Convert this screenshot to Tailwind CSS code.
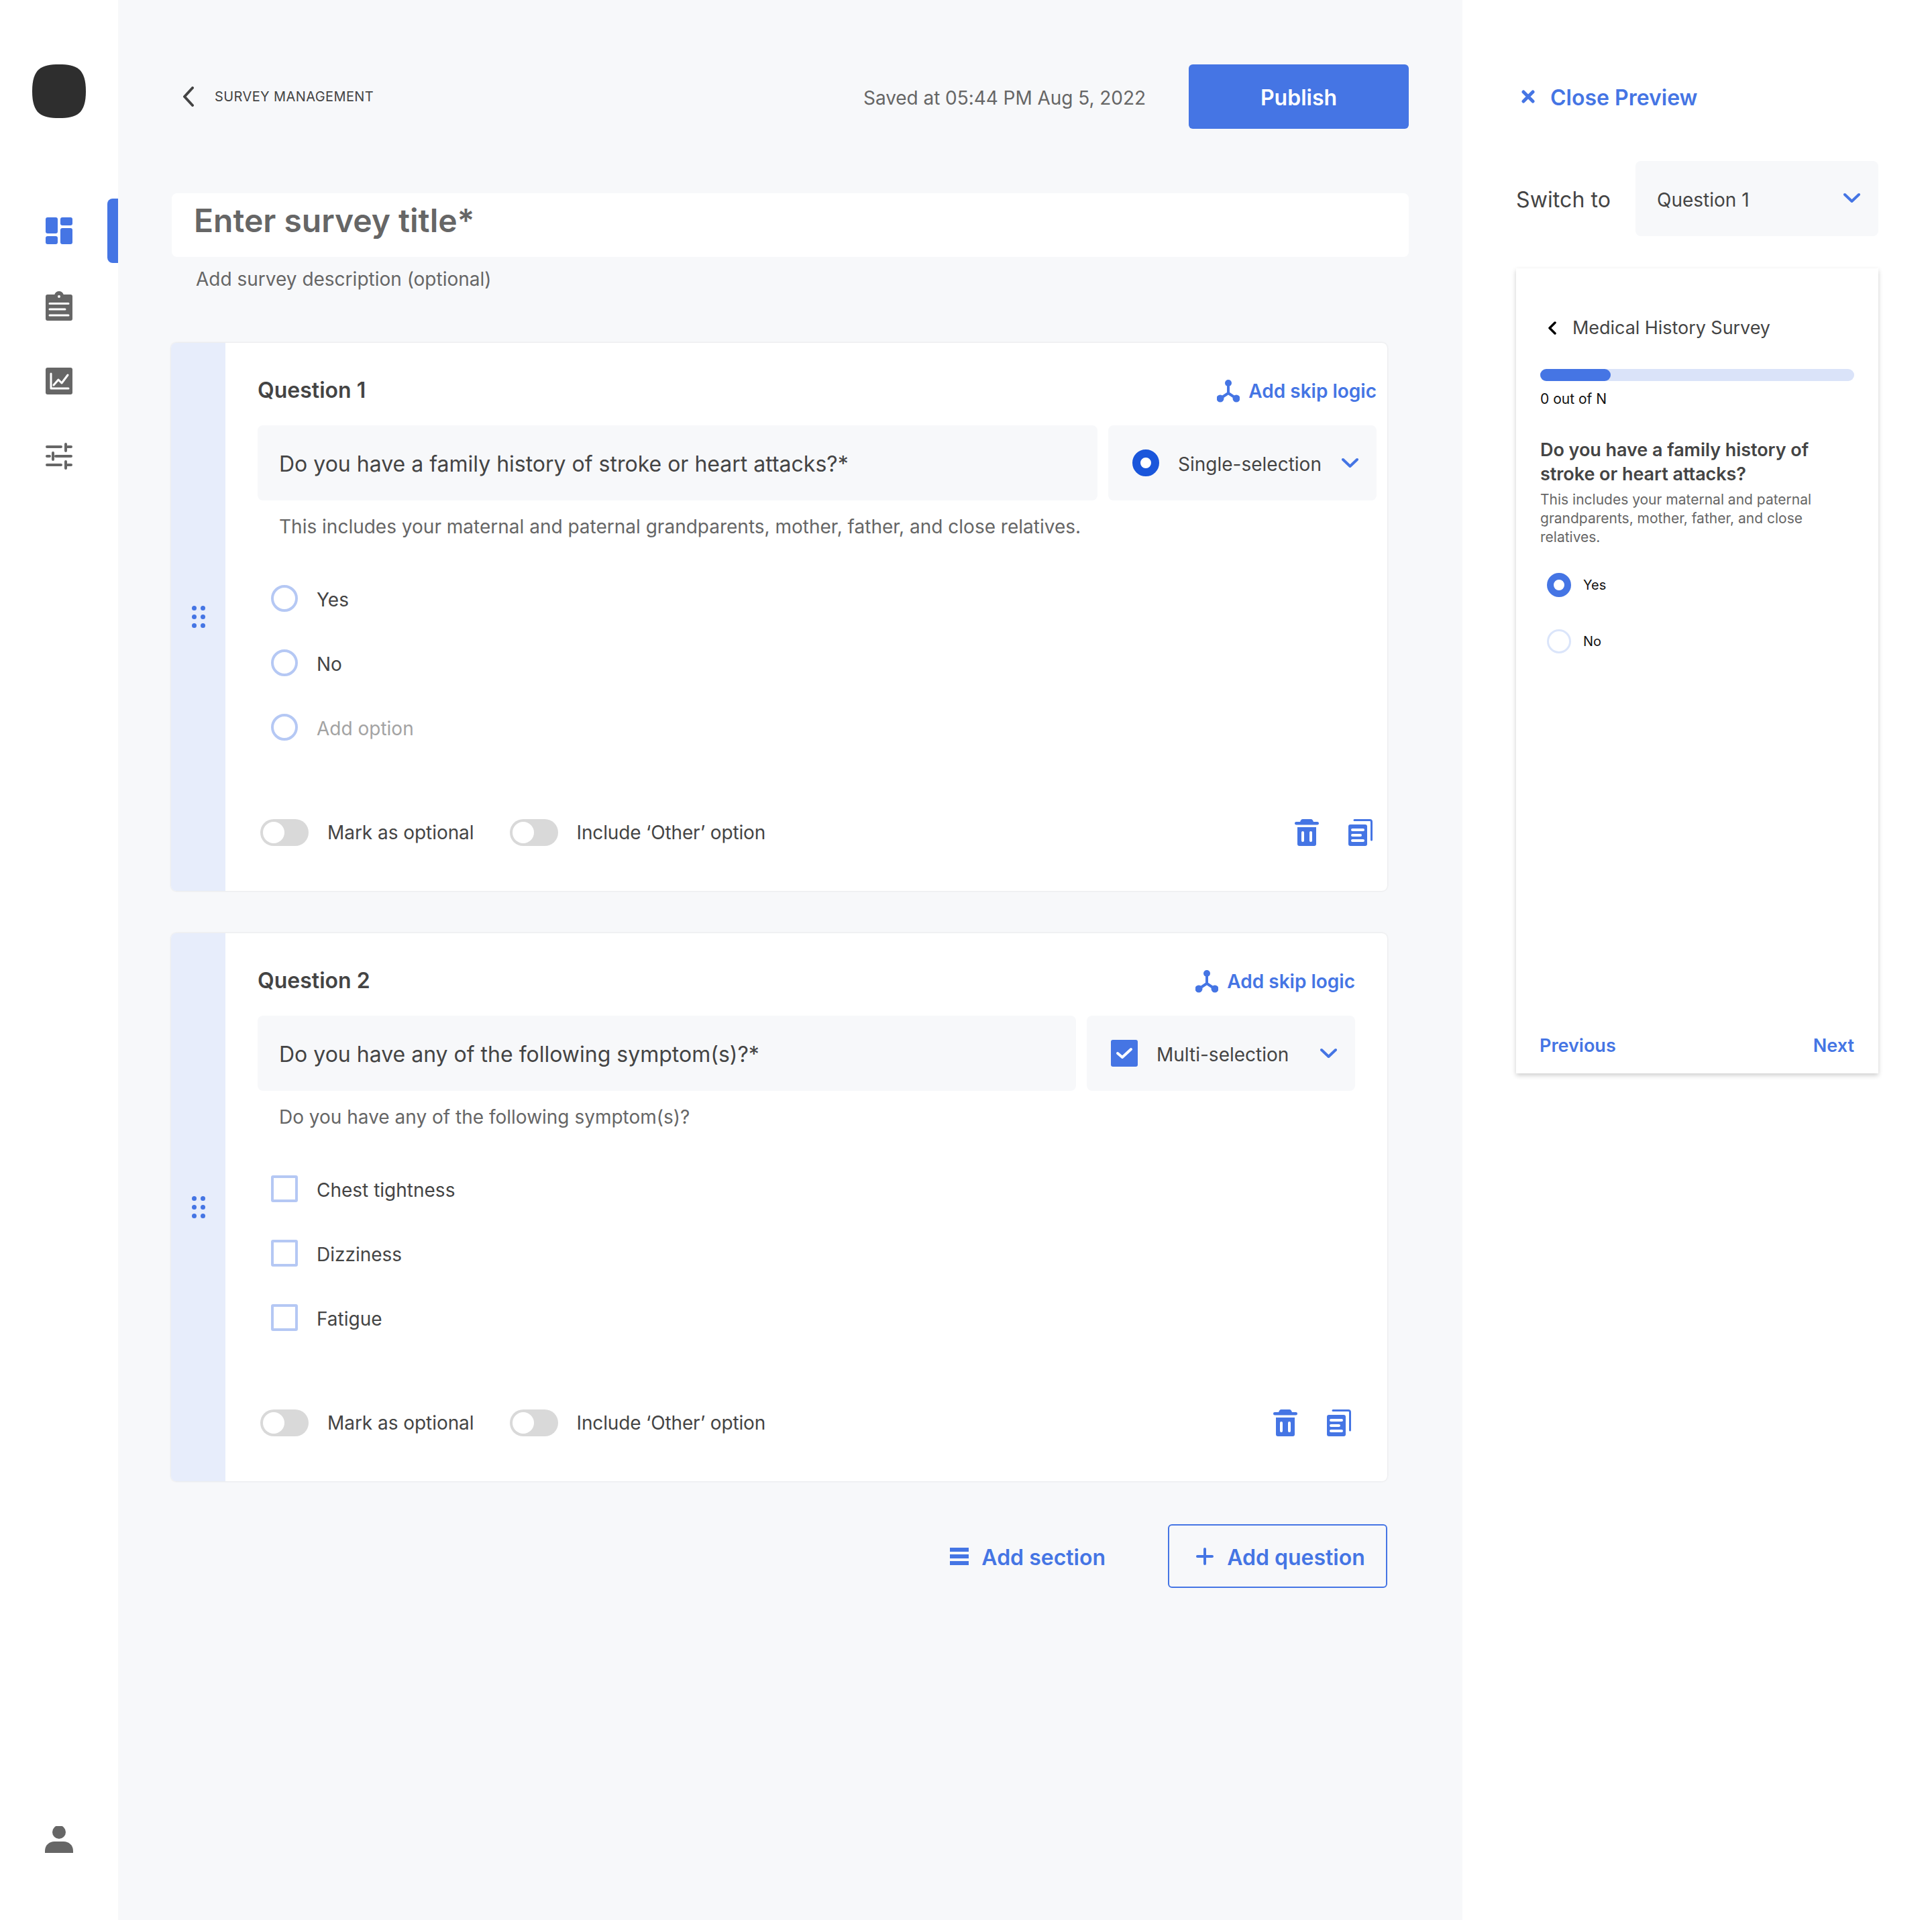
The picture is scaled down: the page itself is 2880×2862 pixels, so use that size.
<!DOCTYPE html>
<html lang="en">
  <head>
    <meta charset="UTF-8" />
    <meta name="viewport" content="width=device-width, initial-scale=1.0" />
    <script src="https://cdn.jsdelivr.net/npm/@tailwindcss/browser@4"></script>
    <title>Survey builder</title>
  </head>
  <body class="bg-white">
    <div class="flex w-[2880px] h-[2862px] font-[Inter,sans-serif] text-[#444444] overflow-hidden">
      <!-- sidebar -->
      <aside class="w-[176px] shrink-0 relative flex flex-col items-start pl-[48px]">
        <svg class="mt-[96px]" width="80" height="80" viewBox="0 0 80 80"><path d="M40 0C66 0 80 6 80 40C80 74 66 80 40 80C14 80 0 74 0 40C0 6 14 0 40 0Z" fill="#2e2e2e"/></svg>
        <div class="absolute left-[160px] top-[296px] w-[16px] h-[96px] bg-[#4575e4] rounded-l-[8px]"></div>
        <svg class="mt-[148px] ml-[20px]" width="40" height="40" viewBox="0 0 40 40" fill="#4575e4"><rect width="18" height="24" rx="3"/><rect y="28" width="18" height="12" rx="3"/><rect x="22" width="18" height="12" rx="3"/><rect x="22" y="16" width="18" height="24" rx="3"/></svg>
        <svg class="mt-[70px] ml-[20px]" width="40" height="44" viewBox="0 0 40 44"><rect y="5" width="40" height="39" rx="3" fill="#666666"/><circle cx="20" cy="7" r="7" fill="#666666"/><circle cx="20" cy="8" r="2" fill="#ffffff"/><path d="M6 18.500H34M6 27H29M6 36H34" stroke="#ffffff" stroke-width="3" stroke-linecap="round"/></svg>
        <svg class="mt-[70px] ml-[20px]" width="40" height="40" viewBox="0 0 40 40"><rect width="40" height="40" rx="3" fill="#666666"/><path d="M8 9V31H34" stroke="#ffffff" stroke-width="3" fill="none" stroke-linecap="round" stroke-linejoin="round"/><path d="M12 26L19 18L24 23L33 11" stroke="#ffffff" stroke-width="3" fill="none" stroke-linecap="round" stroke-linejoin="round"/></svg>
        <svg class="mt-[72px] ml-[20px]" width="40" height="40" viewBox="0 0 40 40" stroke="#666666" stroke-width="4" fill="none" stroke-linecap="round"><path d="M2 6H23M33 6H38M30 2V12"/><path d="M2 20H6M15 20H38M11 15V25"/><path d="M2 33H23M33 33H38M30 28V38"/></svg>
        <svg class="absolute left-[67px] top-[2722px]" width="42" height="40" viewBox="0 0 42 40" fill="#666666"><circle cx="21" cy="9" r="10"/><path d="M0 40V37C0 28 7 23 14 23H28C35 23 42 28 42 37V40Z"/></svg>
      </aside>

      <!-- builder -->
      <main class="w-[2004px] shrink-0 bg-[#f7f8fa] pl-[79px] pt-[96px]">
        <header class="flex items-center h-[96px] w-[1845px]">
          <svg class="ml-[17px]" width="18" height="30" viewBox="0 0 18 30" fill="none" stroke="#444444" stroke-width="4" stroke-linecap="round" stroke-linejoin="round"><path d="M15 2L3 15L15 28"/></svg>
          <span class="ml-[30px] text-[20px] tracking-[0.4px] uppercase">Survey Management</span>
          <span class="ml-auto mr-[64px] pt-[4px] text-[28px] tracking-[-0.05px] text-[#666666]">Saved at 05:44 PM Aug 5, 2022</span>
          <button class="w-[328px] h-[96px] pt-[4px] bg-[#4575e4] rounded-[6px] text-white text-[32px] font-semibold">Publish</button>
        </header>

        <div class="ml-[1px] mt-[96px] w-[1844px] h-[95px] bg-white rounded-[8px] pl-[33px] pt-[5px]">
          <h1 class="text-[48px] leading-[72px] font-semibold text-[#666666]">Enter survey title*</h1>
        </div>
        <p class="mt-[13px] pl-[37px] text-[28px] leading-[40px] text-[#666666]">Add survey description (optional)</p>

        <!-- question 1 -->
        <section class="mt-[75px] flex w-[1813px] h-[817px] bg-white rounded-[8px] shadow-[0_0_3px_rgba(0,0,0,0.12)] overflow-hidden">
          <div class="w-[81px] shrink-0 bg-[#e7edfb] flex items-center justify-center">
            <div class="grid grid-cols-2 gap-x-[6px] gap-y-[6px]">
              <span class="w-[7px] h-[7px] rounded-full bg-[#4575e4]"></span><span class="w-[7px] h-[7px] rounded-full bg-[#4575e4]"></span>
              <span class="w-[7px] h-[7px] rounded-full bg-[#4575e4]"></span><span class="w-[7px] h-[7px] rounded-full bg-[#4575e4]"></span>
              <span class="w-[7px] h-[7px] rounded-full bg-[#4575e4]"></span><span class="w-[7px] h-[7px] rounded-full bg-[#4575e4]"></span>
            </div>
          </div>
          <div class="flex-1 pl-[48px] pr-[16px]">
            <div class="h-[123px] pt-[15px] flex items-center justify-between">
              <h2 class="pt-[4px] text-[32px] font-semibold">Question 1</h2>
              <a class="mt-[6px] flex items-center gap-[13px] text-[28px] font-semibold text-[#4575e4]">
                <svg width="34" height="34" viewBox="0 0 34 34" fill="#4575e4" stroke="#4575e4"><path d="M17 5V20M17 20L5 28M17 20L29 28" stroke-width="4"/><circle cx="17" cy="5" r="5" stroke="none"/><circle cx="5" cy="28" r="5.500" stroke="none"/><circle cx="29" cy="28" r="5.500" stroke="none"/></svg>
                Add skip logic
              </a>
            </div>
            <div class="flex gap-[16px] h-[112px]">
              <div class="flex-1 bg-[#f7f8fa] rounded-[8px] pl-[32px] pt-[4px] flex items-center text-[32px]">Do you have a family history of stroke or heart attacks?*</div>
              <div class="w-[400px] bg-[#f7f8fa] rounded-[8px] pl-[36px] flex items-center text-[28px]">
                <span class="w-[40px] h-[40px] rounded-full border-[12px] border-[#1a56db] bg-white"></span>
                <span class="ml-[28px] pt-[4px]">Single-selection</span>
                <svg class="ml-auto mr-[27px]" width="25" height="16" viewBox="0 0 25 16" fill="none" stroke="#4575e4" stroke-width="4" stroke-linecap="round" stroke-linejoin="round"><path d="M2 3L12.500 13L23 3"/></svg>
              </div>
            </div>
            <p class="mt-[19px] pl-[32px] text-[28px] leading-[40px] text-[#666666]">This includes your maternal and paternal grandparents, mother, father, and close relatives.</p>
            <ul class="mt-[67px] pl-[20px] flex flex-col gap-[56px] text-[28px]">
              <li class="flex items-center gap-[28px] h-[40px]"><span class="w-[40px] h-[40px] rounded-full border-[4px] border-[#b5c8f4]"></span><span class="pt-[4px]">Yes</span></li>
              <li class="flex items-center gap-[28px] h-[40px]"><span class="w-[40px] h-[40px] rounded-full border-[4px] border-[#b5c8f4]"></span><span class="pt-[4px]">No</span></li>
              <li class="flex items-center gap-[28px] h-[40px] text-[#a3a3a3]"><span class="w-[40px] h-[40px] rounded-full border-[4px] border-[#b5c8f4]"></span><span class="pt-[4px]">Add option</span></li>
            </ul>
            <div class="mt-[116px] pl-[4px] flex items-center text-[28px]">
              <span class="w-[72px] h-[40px] rounded-full bg-[#d9d9d9] p-[4px]"><span class="block w-[32px] h-[32px] rounded-full bg-white"></span></span>
              <span class="ml-[28px] tracking-[-0.05px]">Mark as optional</span>
              <span class="ml-[53px] w-[72px] h-[40px] rounded-full bg-[#d9d9d9] p-[4px]"><span class="block w-[32px] h-[32px] rounded-full bg-white"></span></span>
              <span class="ml-[28px] tracking-[-0.15px]">Include ‘Other’ option</span>
              <svg class="ml-auto" width="36" height="40" viewBox="0 0 36 40"><path d="M8 5C8 2 10 0 12 0H24C26 0 28 2 28 5Z" fill="#4575e4"/><rect y="4" width="36" height="4.500" rx="2.200" fill="#4575e4"/><path d="M4 12H32V37C32 39 31 40 29 40H7C5 40 4 39 4 37Z" fill="#4575e4"/><rect x="10" y="18" width="4" height="16" rx="2" fill="#ffffff"/><rect x="22" y="18" width="4" height="16" rx="2" fill="#ffffff"/></svg>
              <svg class="ml-[44px] mr-[6px]" width="36" height="40" viewBox="0 0 36 40"><path d="M9 1.500H32C33.500 1.500 34.500 2.500 34.500 4V31" stroke="#4575e4" stroke-width="3" fill="none" stroke-linecap="round"/><rect y="8" width="28" height="32" rx="3" fill="#4575e4"/><path d="M6 16H22M6 24H18M6 32H22" stroke="#ffffff" stroke-width="4" stroke-linecap="round"/></svg>
            </div>
          </div>
        </section>

        <!-- question 2 -->
        <section class="mt-[63px] flex w-[1813px] h-[817px] bg-white rounded-[8px] shadow-[0_0_3px_rgba(0,0,0,0.12)] overflow-hidden">
          <div class="w-[81px] shrink-0 bg-[#e7edfb] flex items-center justify-center">
            <div class="grid grid-cols-2 gap-x-[6px] gap-y-[6px]">
              <span class="w-[7px] h-[7px] rounded-full bg-[#4575e4]"></span><span class="w-[7px] h-[7px] rounded-full bg-[#4575e4]"></span>
              <span class="w-[7px] h-[7px] rounded-full bg-[#4575e4]"></span><span class="w-[7px] h-[7px] rounded-full bg-[#4575e4]"></span>
              <span class="w-[7px] h-[7px] rounded-full bg-[#4575e4]"></span><span class="w-[7px] h-[7px] rounded-full bg-[#4575e4]"></span>
            </div>
          </div>
          <div class="flex-1 pl-[48px] pr-[48px]">
            <div class="h-[123px] pt-[15px] flex items-center justify-between">
              <h2 class="pt-[4px] text-[32px] font-semibold">Question 2</h2>
              <a class="mt-[6px] flex items-center gap-[13px] text-[28px] font-semibold text-[#4575e4]">
                <svg width="34" height="34" viewBox="0 0 34 34" fill="#4575e4" stroke="#4575e4"><path d="M17 5V20M17 20L5 28M17 20L29 28" stroke-width="4"/><circle cx="17" cy="5" r="5" stroke="none"/><circle cx="5" cy="28" r="5.500" stroke="none"/><circle cx="29" cy="28" r="5.500" stroke="none"/></svg>
                Add skip logic
              </a>
            </div>
            <div class="flex gap-[16px] h-[112px]">
              <div class="flex-1 bg-[#f7f8fa] rounded-[8px] pl-[32px] pt-[4px] flex items-center text-[32px]">Do you have any of the following symptom(s)?*</div>
              <div class="w-[400px] bg-[#f7f8fa] rounded-[8px] pl-[36px] flex items-center text-[28px]">
                <span class="w-[40px] h-[40px] rounded-[3px] bg-[#4575e4] flex items-center justify-center">
                  <svg width="26" height="20" viewBox="0 0 26 20" fill="none" stroke="#ffffff" stroke-width="4" stroke-linecap="round" stroke-linejoin="round"><path d="M3 10L10 16L23 4"/></svg>
                </span>
                <span class="ml-[28px] pt-[4px]">Multi-selection</span>
                <svg class="ml-auto mr-[27px]" width="25" height="16" viewBox="0 0 25 16" fill="none" stroke="#4575e4" stroke-width="4" stroke-linecap="round" stroke-linejoin="round"><path d="M2 3L12.500 13L23 3"/></svg>
              </div>
            </div>
            <p class="mt-[19px] pl-[32px] text-[28px] leading-[40px] text-[#666666]">Do you have any of the following symptom(s)?</p>
            <ul class="mt-[67px] pl-[20px] flex flex-col gap-[56px] text-[28px]">
              <li class="flex items-center gap-[28px] h-[40px]"><span class="w-[40px] h-[40px] rounded-[3px] border-[4px] border-[#b5c8f4]"></span><span class="pt-[4px]">Chest tightness</span></li>
              <li class="flex items-center gap-[28px] h-[40px]"><span class="w-[40px] h-[40px] rounded-[3px] border-[4px] border-[#b5c8f4]"></span><span class="pt-[4px]">Dizziness</span></li>
              <li class="flex items-center gap-[28px] h-[40px]"><span class="w-[40px] h-[40px] rounded-[3px] border-[4px] border-[#b5c8f4]"></span><span class="pt-[4px]">Fatigue</span></li>
            </ul>
            <div class="mt-[116px] pl-[4px] flex items-center text-[28px]">
              <span class="w-[72px] h-[40px] rounded-full bg-[#d9d9d9] p-[4px]"><span class="block w-[32px] h-[32px] rounded-full bg-white"></span></span>
              <span class="ml-[28px] tracking-[-0.05px]">Mark as optional</span>
              <span class="ml-[53px] w-[72px] h-[40px] rounded-full bg-[#d9d9d9] p-[4px]"><span class="block w-[32px] h-[32px] rounded-full bg-white"></span></span>
              <span class="ml-[28px] tracking-[-0.15px]">Include ‘Other’ option</span>
              <svg class="ml-auto" width="36" height="40" viewBox="0 0 36 40"><path d="M8 5C8 2 10 0 12 0H24C26 0 28 2 28 5Z" fill="#4575e4"/><rect y="4" width="36" height="4.500" rx="2.200" fill="#4575e4"/><path d="M4 12H32V37C32 39 31 40 29 40H7C5 40 4 39 4 37Z" fill="#4575e4"/><rect x="10" y="18" width="4" height="16" rx="2" fill="#ffffff"/><rect x="22" y="18" width="4" height="16" rx="2" fill="#ffffff"/></svg>
              <svg class="ml-[44px] mr-[6px]" width="36" height="40" viewBox="0 0 36 40"><path d="M9 1.500H32C33.500 1.500 34.500 2.500 34.500 4V31" stroke="#4575e4" stroke-width="3" fill="none" stroke-linecap="round"/><rect y="8" width="28" height="32" rx="3" fill="#4575e4"/><path d="M6 16H22M6 24H18M6 32H22" stroke="#ffffff" stroke-width="4" stroke-linecap="round"/></svg>
            </div>
          </div>
        </section>

        <div class="mt-[64px] w-[1813px] flex justify-end items-center text-[32px] font-semibold text-[#4575e4]">
          <a class="flex items-center gap-[19px]">
            <svg class="ml-[1px]" width="28" height="26" viewBox="0 0 28 26" fill="#4575e4"><rect width="28" height="6"/><rect y="10" width="28" height="6"/><rect y="20" width="28" height="6"/></svg>
            <span class="pt-[4px]">Add section</span>
          </a>
          <button class="ml-[93px] w-[327px] h-[95px] pl-[9px] border-[2px] border-[#4575e4] rounded-[6px] flex items-center justify-center gap-[20px] font-semibold">
            <svg width="26" height="26" viewBox="0 0 26 26" stroke="#4575e4" stroke-width="4" stroke-linecap="round"><path d="M13 2V24M2 13H24"/></svg>
            <span class="pt-[4px]">Add question</span>
          </button>
        </div>
      </main>

      <!-- preview -->
      <aside class="w-[700px] shrink-0 pl-[80px] pt-[96px]">
        <div class="h-[96px] pl-[8px] flex items-center gap-[23px] text-[32px] font-semibold text-[#4575e4]">
          <svg width="20" height="20" viewBox="0 0 20 20" stroke="#4575e4" stroke-width="5" stroke-linecap="round"><path d="M3 3L17 17M17 3L3 17"/></svg>
          <span class="pt-[4px]">Close Preview</span>
        </div>
        <div class="mt-[48px] flex items-center h-[112px]">
          <span class="w-[178px] pt-[4px] text-[32px] tracking-[0.1px]">Switch to</span>
          <div class="w-[362px] h-[112px] bg-[#f7f8fa] rounded-[8px] pl-[32px] pr-[27px] flex items-center justify-between text-[28px]">
            <span class="pt-[4px]">Question 1</span>
            <svg class="mb-[2px]" width="25" height="16" viewBox="0 0 25 16" fill="none" stroke="#4575e4" stroke-width="4" stroke-linecap="round" stroke-linejoin="round"><path d="M2 3L12.500 13L23 3"/></svg>
          </div>
        </div>
        <div class="mt-[48px] w-[540px] h-[1200px] bg-white shadow-[0_3px_7px_rgba(0,0,0,0.2)] px-[36px] flex flex-col">
          <div class="mt-[69px] h-[40px] flex items-center text-[27px] tracking-[-0.05px]">
            <svg class="ml-[12px]" width="12" height="20" viewBox="0 0 12 20" fill="none" stroke="#000000" stroke-width="3.500" stroke-linecap="round" stroke-linejoin="round"><path d="M10 2L2 10L10 18"/></svg>
            <span class="ml-[24px] pt-[1px]">Medical History Survey</span>
          </div>
          <div class="mt-[41px] h-[18px] rounded-full bg-[#dae3f9]"><div class="h-[18px] w-[105px] rounded-full bg-[#4575e4]"></div></div>
          <p class="mt-[12px] text-[21px] leading-[30px] text-[#111111]">0 out of N</p>
          <h3 class="mt-[43px] text-[27px] leading-[36px] font-semibold tracking-[-0.05px]">Do you have a family history of stroke or heart attacks?</h3>
          <p class="mt-[6px] text-[21px] leading-[28px] text-[#666666]">This includes your maternal and paternal grandparents, mother, father, and close relatives.</p>
          <div class="mt-[39px] pl-[10px] flex items-center gap-[18px] h-[36px] text-[20px] text-[#111111]"><span class="w-[36px] h-[36px] rounded-full border-[10px] border-[#4575e4] bg-white"></span>Yes</div>
          <div class="mt-[48px] pl-[10px] flex items-center gap-[18px] h-[36px] text-[20px] text-[#111111]"><span class="w-[36px] h-[36px] rounded-full border-[3px] border-[#dbe5fa] bg-white"></span>No</div>
          <div class="mt-auto mb-[21px] h-[40px] flex items-center justify-between text-[27px] font-semibold text-[#4575e4]">
            <span class="-ml-[1px]">Previous</span>
            <span>Next</span>
          </div>
        </div>
      </aside>
    </div>
  </body>
</html>
